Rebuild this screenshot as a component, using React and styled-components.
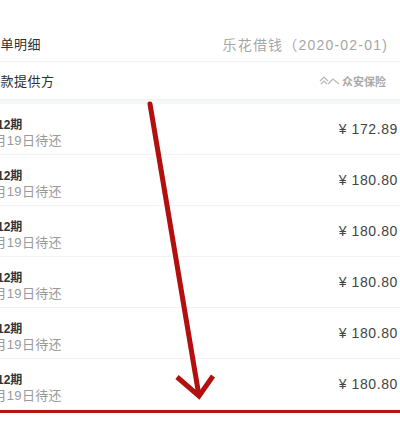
import React from "react";
import styled, { createGlobalStyle } from "styled-components";

const GlobalStyle = createGlobalStyle`
  body {
    margin: 0;
    background: #fff;
    font-family: "Liberation Sans", "Noto Sans CJK SC", sans-serif;
  }
`;

const bills = [
  { no: "1/12期", due: "2月19日待还", amount: "172.89" },
  { no: "2/12期", due: "3月19日待还", amount: "180.80" },
  { no: "3/12期", due: "4月19日待还", amount: "180.80" },
  { no: "4/12期", due: "5月19日待还", amount: "180.80" },
  { no: "5/12期", due: "6月19日待还", amount: "180.80" },
  { no: "6/12期", due: "7月19日待还", amount: "180.80" },
];

const App = () => {
  return (
    <Screen>
      <GlobalStyle />
      <Page>
        <HeadRow $height={36}>
          <HeadTitle>账单明细</HeadTitle>
          <HeadNote>乐花借钱（2020-02-01)</HeadNote>
        </HeadRow>
        <HeadRow $height={38}>
          <HeadTitle>借款提供方</HeadTitle>
          <Insurer>
            <svg width="22" height="12" viewBox="0 0 22 12">
              <path
                d="M1 6 L5 2 L9 6 M2 9 L5 6 L8 9 M9 9 L14 4 L20 9"
                fill="none"
                stroke="#b8b8b8"
                strokeWidth="1.2"
              />
            </svg>
            众安保险
          </Insurer>
        </HeadRow>
        <Band />
        <List>
          {bills.map((bill) => (
            <BillRow key={bill.no}>
              <BillInfo>
                <BillNo>{bill.no}</BillNo>
                <BillDue>{bill.due}</BillDue>
              </BillInfo>
              <Amount>¥ {bill.amount}</Amount>
            </BillRow>
          ))}
        </List>
      </Page>
      <Marks width="400" height="434" viewBox="0 0 400 434">
        <line
          x1="150"
          y1="104"
          x2="198"
          y2="390"
          stroke="#b2100f"
          strokeWidth="5"
          strokeLinecap="round"
        />
        <path
          d="M177 377 L199 396 L213 376"
          fill="none"
          stroke="#b2100f"
          strokeWidth="5"
          strokeLinejoin="miter"
        />
        <rect x="0" y="410" width="400" height="3" fill="#b51515" />
      </Marks>
    </Screen>
  );
};

export default App;

const Screen = styled.div`
  position: relative;
  width: 400px;
  height: 434px;
  overflow: hidden;
  background: #fff;
`;

const Page = styled.div`
  margin-left: -26px;
  padding-top: 26px;
`;

const HeadRow = styled.div`
  height: ${(props) => props.$height}px;
  display: flex;
  align-items: center;
  justify-content: space-between;
  padding: 0 12px 0 0;
  border-bottom: 1px solid #f2f2f2;
  box-sizing: border-box;
`;

const HeadTitle = styled.span`
  font-size: 13px;
  color: #2f2f2f;
  letter-spacing: 0.5px;
  padding-left: 13px;
`;

const HeadNote = styled.span`
  font-size: 14px;
  color: #a6a6a6;
  letter-spacing: 1.2px;
`;

const Insurer = styled.span`
  display: flex;
  align-items: center;
  gap: 1px;
  font-size: 11px;
  font-weight: bold;
  color: #a9a9a9;
  padding-right: 2px;
`;

const Band = styled.div`
  height: 4px;
  background: #f5f7f7;
`;

const List = styled.div`
  display: flex;
  flex-direction: column;
`;

const BillRow = styled.div`
  height: 51px;
  display: flex;
  align-items: center;
  justify-content: space-between;
  border-bottom: 1px solid #f3f3f3;
  box-sizing: border-box;
  padding-right: 2px;
`;

const BillInfo = styled.div`
  display: flex;
  flex-direction: column;
  padding-left: 13px;
  margin-top: 7px;
`;

const BillNo = styled.span`
  font-size: 12px;
  font-weight: bold;
  color: #333;
  line-height: 15px;
`;

const BillDue = styled.span`
  font-size: 13px;
  color: #9a9a9a;
  line-height: 15px;
  letter-spacing: 0.3px;
  margin-left: -1px;
`;

const Amount = styled.span`
  font-size: 14px;
  color: #444;
  letter-spacing: 0.6px;
`;

const Marks = styled.svg`
  position: absolute;
  left: 0;
  top: 0;
  pointer-events: none;
`;
